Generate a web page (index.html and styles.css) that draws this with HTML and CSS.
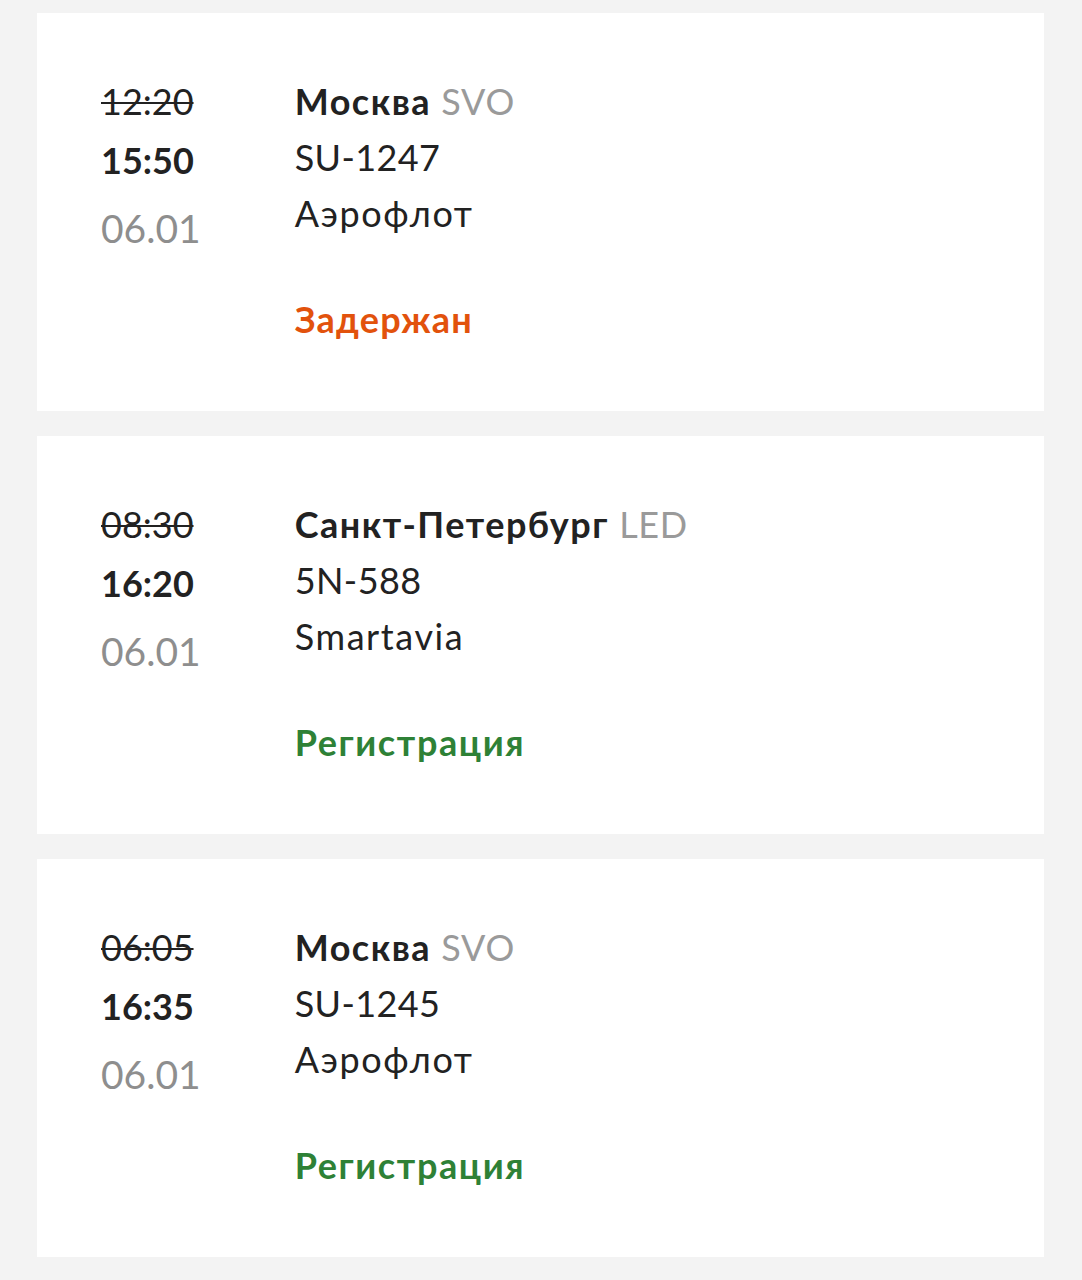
FILE: index.html
```html
<!DOCTYPE html>
<html lang="ru">
<head>
<meta charset="utf-8">
<title>Рейсы</title>
<link rel="stylesheet" href="styles.css">
</head>
<body>
<main class="list">
  <section class="card">
    <div class="times">
      <div class="old">12:20</div>
      <div class="new">15:50</div>
      <div class="date">06.01</div>
    </div>
    <div class="info">
      <div class="city">Москва <span class="code">SVO</span></div>
      <div class="flight">SU-1247</div>
      <div class="airline">Аэрофлот</div>
      <div class="status delayed">Задержан</div>
    </div>
  </section>
  <section class="card">
    <div class="times">
      <div class="old">08:30</div>
      <div class="new">16:20</div>
      <div class="date">06.01</div>
    </div>
    <div class="info">
      <div class="city">Санкт-Петербург <span class="code">LED</span></div>
      <div class="flight">5N-588</div>
      <div class="airline">Smartavia</div>
      <div class="status checkin">Регистрация</div>
    </div>
  </section>
  <section class="card">
    <div class="times">
      <div class="old">06:05</div>
      <div class="new">16:35</div>
      <div class="date">06.01</div>
    </div>
    <div class="info">
      <div class="city">Москва <span class="code">SVO</span></div>
      <div class="flight">SU-1245</div>
      <div class="airline">Аэрофлот</div>
      <div class="status checkin">Регистрация</div>
    </div>
  </section>
</main>
</body>
</html>
```
FILE: styles.css
```css
html, body {
  margin: 0;
  padding: 0;
}
body {
  background: #f3f3f3;
  font-family: Lato, "Open Sans", "DejaVu Sans", sans-serif;
  color: #222222;
  font-size: 36px;
  line-height: 56px;
}
.list {
  display: flex;
  flex-direction: column;
  gap: 25px;
  padding: 13px 38px 23px 37px;
}
.card {
  background: #ffffff;
  display: flex;
  gap: 94px;
  padding: 60px 64px 64px 64px;
}
.times {
  display: flex;
  flex-direction: column;
}
.old {
  text-decoration: line-through;
  text-decoration-thickness: 2px;
}
.new {
  font-weight: 700;
  margin-top: 3px;
}
.date {
  color: #8e8e8e;
  font-size: 39px;
  margin-top: 12px;
}
.info {
  display: flex;
  flex-direction: column;
}
.city {
  font-weight: 700;
  letter-spacing: 1.5px;
}
.code {
  font-weight: 400;
  color: #9a9a9a;
  letter-spacing: 0.7px;
}
.flight {
  letter-spacing: 0.4px;
}
.airline {
  letter-spacing: 1.6px;
}
.status {
  font-weight: 700;
  margin-top: 50px;
  letter-spacing: 1.4px;
}
.delayed {
  color: #e2520c;
  letter-spacing: 1.2px;
}
.checkin {
  color: #2e8136;
  letter-spacing: 1.6px;
}
```
